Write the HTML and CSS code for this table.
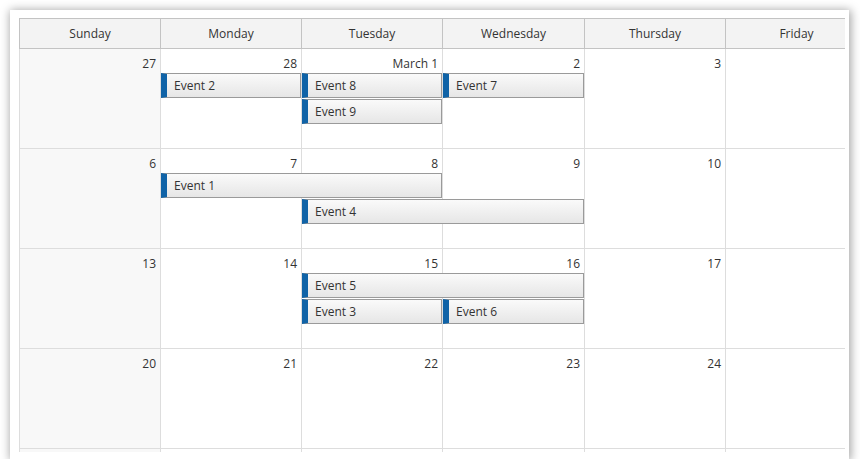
FILE: index.html
```html
<!DOCTYPE html>
<html>
<head>
<meta charset="utf-8">
<link rel="stylesheet" href="styles.css">
</head>
<body>
<div class="panel">
  <div class="viewport">
    <div class="calendar">
      <div class="header">
        <div class="hcell">Sunday</div>
        <div class="hcell">Monday</div>
        <div class="hcell">Tuesday</div>
        <div class="hcell">Wednesday</div>
        <div class="hcell">Thursday</div>
        <div class="hcell">Friday</div>
      </div>

      <div class="week">
        <div class="cell weekend c1"><span class="num">27</span></div>
        <div class="cell c2"><span class="num">28</span></div>
        <div class="cell c3"><span class="num">March 1</span></div>
        <div class="cell c4"><span class="num">2</span></div>
        <div class="cell c5"><span class="num">3</span></div>
        <div class="cell c6"></div>
        <div class="event r1 s2 w1">Event 2</div>
        <div class="event r1 s3 w1">Event 8</div>
        <div class="event r1 s4 w1">Event 7</div>
        <div class="event r2 s3 w1">Event 9</div>
      </div>

      <div class="week">
        <div class="cell weekend c1"><span class="num">6</span></div>
        <div class="cell c2"><span class="num">7</span></div>
        <div class="cell c3"><span class="num">8</span></div>
        <div class="cell c4"><span class="num">9</span></div>
        <div class="cell c5"><span class="num">10</span></div>
        <div class="cell c6"></div>
        <div class="event r1 s2 w2">Event 1</div>
        <div class="event r2 s3 w2">Event 4</div>
      </div>

      <div class="week">
        <div class="cell weekend c1"><span class="num">13</span></div>
        <div class="cell c2"><span class="num">14</span></div>
        <div class="cell c3"><span class="num">15</span></div>
        <div class="cell c4"><span class="num">16</span></div>
        <div class="cell c5"><span class="num">17</span></div>
        <div class="cell c6"></div>
        <div class="event r1 s3 w2">Event 5</div>
        <div class="event r2 s3 w1">Event 3</div>
        <div class="event r2 s4 w1">Event 6</div>
      </div>

      <div class="week">
        <div class="cell weekend c1"><span class="num">20</span></div>
        <div class="cell c2"><span class="num">21</span></div>
        <div class="cell c3"><span class="num">22</span></div>
        <div class="cell c4"><span class="num">23</span></div>
        <div class="cell c5"><span class="num">24</span></div>
        <div class="cell c6"></div>
      </div>

      <div class="week">
        <div class="cell weekend c1"></div>
        <div class="cell c2"></div>
        <div class="cell c3"></div>
        <div class="cell c4"></div>
        <div class="cell c5"></div>
        <div class="cell c6"></div>
      </div>
    </div>
  </div>
</div>
</body>
</html>
```

FILE: styles.css
```css
html, body {
  margin: 0;
  padding: 0;
  background: #ffffff;
}

body {
  font-family: "Open Sans", "Noto Sans", "Liberation Sans", sans-serif;
  font-size: 12px;
  color: #333333;
}

.panel {
  margin: 10px 0 0 10px;
  width: 839px;
  height: 449px;
  box-sizing: border-box;
  padding: 8px 4px 7px 9px;
  background: #ffffff;
  box-shadow: 1px 1px 9px 1px rgba(0, 0, 0, 0.36);
}

.viewport {
  width: 826px;
  height: 434px;
  overflow: hidden;
}

.calendar {
  width: 848px;
}

.header {
  display: grid;
  grid-template-columns: 141px 141px 141px 142px 141px 142px;
  border-top: 1px solid #c3c3c3;
  border-bottom: 1px solid #c3c3c3;
  background: #f3f3f3;
}

.hcell {
  height: 29px;
  line-height: 29px;
  text-align: center;
  border-left: 1px solid #c3c3c3;
  color: #333333;
}

.week {
  display: grid;
  grid-template-columns: 141px 141px 141px 142px 141px 142px;
  grid-template-rows: 24px 26px 26px 23px;
  border-bottom: 1px solid #dddddd;
}

.cell {
  grid-row: 1 / -1;
  border-left: 1px solid #dddddd;
  background: #ffffff;
  text-align: right;
}

.cell.weekend {
  background: #f8f8f8;
}

.c1 { grid-column: 1; }
.c2 { grid-column: 2; }
.c3 { grid-column: 3; }
.c4 { grid-column: 4; }
.c5 { grid-column: 5; }
.c6 { grid-column: 6; }

.num {
  display: block;
  padding: 7px 4px 0 0;
  line-height: 16px;
  color: #333333;
}

.event {
  margin-left: 1px;
  height: 25px;
  box-sizing: border-box;
  border: 1px solid #9a9a9a;
  border-left: 6px solid #1063a7;
  padding-left: 7px;
  line-height: 23px;
  background: linear-gradient(to bottom, #fafafa 0%, #e6e6e6 100%);
  color: #333333;
  white-space: nowrap;
  overflow: hidden;
}

.r1 { grid-row: 2; }
.r2 { grid-row: 3; }

.s2 { grid-column-start: 2; }
.s3 { grid-column-start: 3; }
.s4 { grid-column-start: 4; }

.w1 { grid-column-end: span 1; }
.w2 { grid-column-end: span 2; }
```
